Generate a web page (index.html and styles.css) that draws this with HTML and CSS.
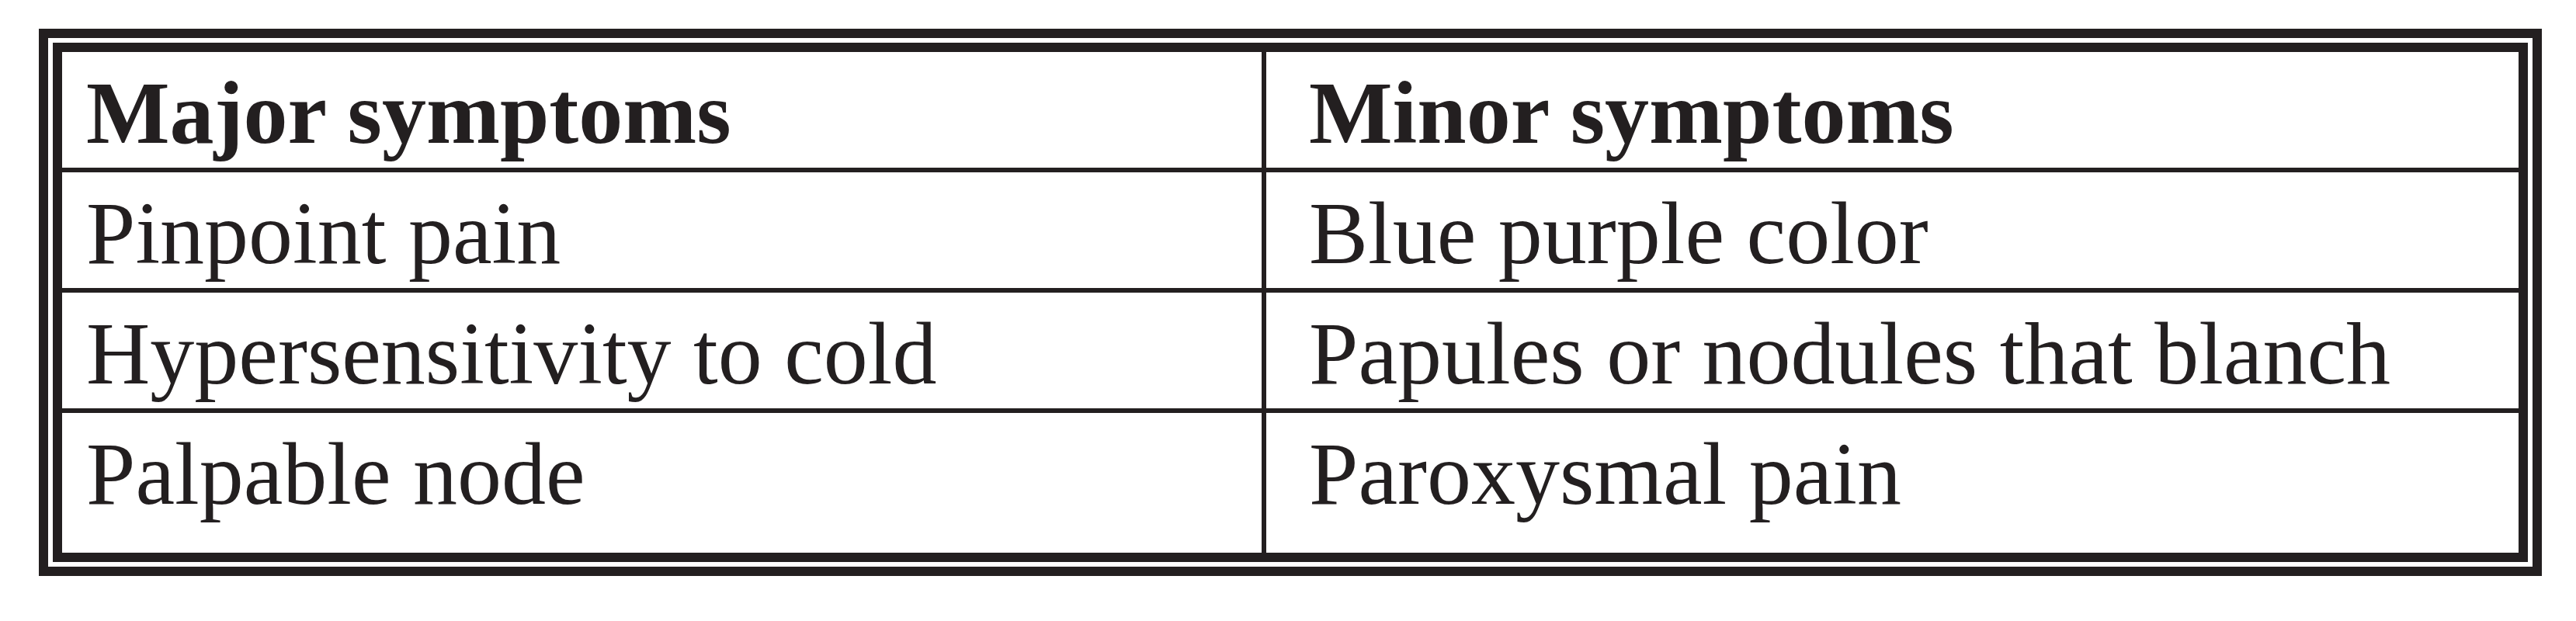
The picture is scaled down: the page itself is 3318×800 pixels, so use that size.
FILE: index.html
```html
<!DOCTYPE html>
<html lang="en">
<head>
<meta charset="utf-8">
<title>Major and minor symptoms</title>
<link rel="stylesheet" href="styles.css">
</head>
<body>
<div class="frame">
  <div class="grid" role="table">
    <div class="cell head col1" role="columnheader">Major symptoms</div>
    <div class="cell head col2" role="columnheader">Minor symptoms</div>
    <div class="cell col1" role="cell">Pinpoint pain</div>
    <div class="cell col2" role="cell">Blue purple color</div>
    <div class="cell col1" role="cell">Hypersensitivity to cold</div>
    <div class="cell col2" role="cell">Papules or nodules that blanch</div>
    <div class="cell col1 last" role="cell">Palpable node</div>
    <div class="cell col2 last" role="cell">Paroxysmal pain</div>
  </div>
</div>
</body>
</html>
```

FILE: styles.css
```css
html, body {
  margin: 0;
  padding: 0;
  background: #ffffff;
}

body {
  font-family: "Liberation Serif", "Times New Roman", serif;
  color: #231f20;
}

.frame {
  box-sizing: border-box;
  width: 3224px;
  margin: 37px 0 0 50px;
  border: 12px solid #231f20;
  padding: 6px;
}

.grid {
  display: grid;
  grid-template-columns: 1551px 1613px;
  border: 12px solid #231f20;
}

.cell {
  box-sizing: border-box;
  font-size: 114px;
  line-height: 114px;
  padding: 22px 0 13px 0;
  border-bottom: 6px solid #231f20;
  white-space: nowrap;
}

.cell.head {
  font-weight: bold;
}

.cell.col1 {
  padding-left: 31px;
  border-right: 6px solid #231f20;
}

.cell.col2 {
  padding-left: 55px;
}

.cell.last {
  border-bottom: none;
  padding-bottom: 44px;
}
```
